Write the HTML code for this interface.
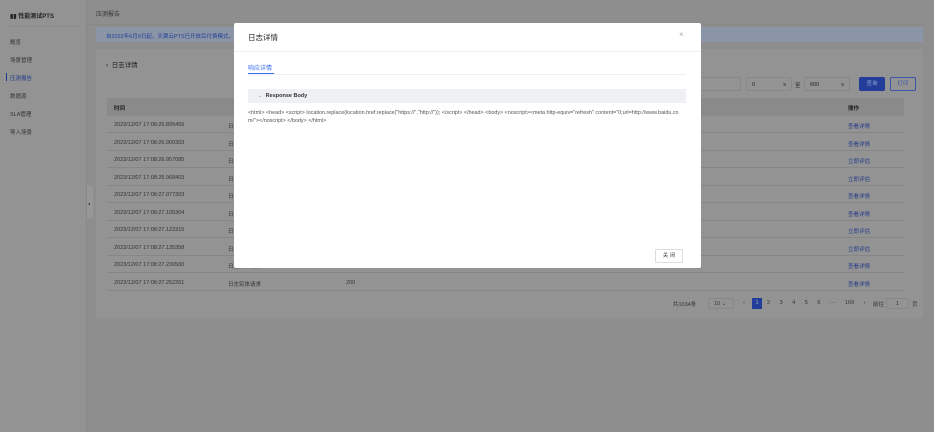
<!DOCTYPE html>
<html style="background:#8e8e8e"><head><meta charset="utf-8"><style>
*{margin:0;padding:0;box-sizing:border-box}
body{width:934px;height:432px;position:relative;overflow:hidden;background:#8e8e8e;font-family:"Liberation Sans","Noto Sans CJK SC",sans-serif;font-size:5.5px;color:#3a3a3a}
.a{position:absolute}
.side{left:0;top:0;width:87px;height:432px;background:#939393;border-right:1px solid #888}
.side div{position:absolute;left:10px;font-size:5.5px;color:#333}
.card{left:96px;top:49px;width:827px;height:269px;background:#939393}
.row{position:absolute;left:107px;width:797px;height:17px;border-bottom:1px solid #868686;font-size:5.5px;color:#333}
.row span{position:absolute;top:6px}
.lnk{color:#223a8a}
.modal{left:234px;top:23px;width:467px;height:245px;background:#fff;border-radius:2px}
</style></head><body>
<div class="a side">
<div style="top:11px;font-weight:bold;font-size:6px;color:#222">▮▮ 性能测试PTS</div>
<div style="left:8px;top:26px;width:70px;border-top:1px solid #8a8a8a"></div>
<div style="top:38px">概览</div>
<div style="top:56px">场景管理</div>
<div style="top:74px;color:#1c3a8c">压测报告</div>
<div style="left:6px;top:73px;width:1px;height:8px;background:#1c3a8c"></div>
<div style="top:92px">数据源</div>
<div style="top:110px">SLA管理</div>
<div style="top:128px">导入场景</div>
</div>
<div class="a" style="left:87px;top:185px;width:6px;height:34px;background:#979797;border-radius:0 4px 4px 0"></div>
<div class="a" style="left:88px;top:201px;font-size:4px;color:#222">◂</div>
<div class="a" style="left:96px;top:9px;font-size:6px;color:#333">压测报告</div>
<div class="a" style="left:87px;top:24px;width:847px;border-top:1px solid #888"></div>
<div class="a" style="left:96px;top:27px;width:838px;height:15px;background:#8c95a6;font-size:5.5px;color:#23409a;padding:5px 10px">自2022年6月9日起，天翼云PTS已开放后付费模式。</div>
<div class="a card">
<div class="a" style="left:10px;top:10px;font-size:6.5px;color:#222">‹&nbsp; 日志详情</div>
<div class="a" style="left:550px;top:28px;width:95px;height:14px;border:1px solid #888;border-radius:2px"></div>
<div class="a" style="left:650px;top:28px;width:46px;height:14px;border:1px solid #888;border-radius:2px;padding:4px 5px;color:#222">0<span style="float:right">s</span></div>
<div class="a" style="left:699px;top:32px;color:#222">至</div>
<div class="a" style="left:708px;top:28px;width:46px;height:14px;border:1px solid #888;border-radius:2px;padding:4px 5px;color:#222">600<span style="float:right">s</span></div>
<div class="a" style="left:763px;top:28px;width:26px;height:14px;background:#233e9a;border-radius:2px;color:#8ea0d0;text-align:center;line-height:14px">查询</div>
<div class="a" style="left:794px;top:28px;width:26px;height:14px;border:1px solid #3a55a5;border-radius:2px;color:#3a55a5;text-align:center;line-height:12px">打印</div>
</div>
<div class="a" style="left:107px;top:98px;width:797px;height:18px;background:#8a8a8a"></div>
<div class="a" style="left:114px;top:104px;font-weight:bold;color:#222">时间</div>
<div class="a" style="left:848px;top:104px;font-weight:bold;color:#222">操作</div>
<div class="row" style="top:116px"><span style="left:7px">2023/12/07 17:08:26.895455</span><span style="left:121px">日</span><span style="left:741px" class="lnk">查看详情</span></div>
<div class="row" style="top:133.5px"><span style="left:7px">2023/12/07 17:08:26.900303</span><span style="left:121px">日</span><span style="left:741px" class="lnk">查看详情</span></div>
<div class="row" style="top:151px"><span style="left:7px">2023/12/07 17:08:26.957085</span><span style="left:121px">日</span><span style="left:741px" class="lnk">立即评估</span></div>
<div class="row" style="top:168.5px"><span style="left:7px">2023/12/07 17:08:26.968403</span><span style="left:121px">日</span><span style="left:741px" class="lnk">立即评估</span></div>
<div class="row" style="top:186px"><span style="left:7px">2023/12/07 17:08:27.077303</span><span style="left:121px">日</span><span style="left:741px" class="lnk">查看详情</span></div>
<div class="row" style="top:203.5px"><span style="left:7px">2023/12/07 17:08:27.105304</span><span style="left:121px">日</span><span style="left:741px" class="lnk">查看详情</span></div>
<div class="row" style="top:221px"><span style="left:7px">2023/12/07 17:08:27.122315</span><span style="left:121px">日</span><span style="left:741px" class="lnk">立即评估</span></div>
<div class="row" style="top:238.5px"><span style="left:7px">2023/12/07 17:08:27.135358</span><span style="left:121px">日</span><span style="left:741px" class="lnk">立即评估</span></div>
<div class="row" style="top:256px"><span style="left:7px">2023/12/07 17:08:27.230500</span><span style="left:121px">日志实体请求</span><span style="left:239px">200</span><span style="left:741px" class="lnk">查看详情</span></div>
<div class="row" style="top:273.5px"><span style="left:7px">2023/12/07 17:08:27.252261</span><span style="left:121px">日志实体请求</span><span style="left:239px">200</span><span style="left:741px" class="lnk">查看详情</span></div>
<div class="a" style="left:673px;top:300px;color:#333">共1034条</div>
<div class="a" style="left:708px;top:298px;width:26px;height:11px;border:1px solid #888;border-radius:2px;padding:2px 5px;color:#333">10 ⌄</div>
<div class="a" style="left:743px;top:300px;color:#333">‹</div>
<div class="a" style="left:752px;top:298px;width:10px;height:11px;background:#233e9a;color:#aab;text-align:center;line-height:11px">1</div>
<div class="a" style="left:767px;top:300px;color:#333;word-spacing:8px">2 3 4 5 6 ··· 169 ›</div>
<div class="a" style="left:873px;top:300px;color:#333">前往</div>
<div class="a" style="left:886px;top:298px;width:23px;height:11px;border:1px solid #888;border-radius:2px;text-align:center;line-height:10px;color:#333">1</div>
<div class="a" style="left:912px;top:300px;color:#333">页</div>
<div class="a" style="left:923px;top:24px;width:11px;height:408px;background:#8e8e8e"></div>

<div class="a modal">
<div class="a" style="left:14px;top:9px;font-size:7.5px;color:#222">日志详情</div>
<div class="a" style="left:445px;top:7px;font-size:8px;color:#aaa">×</div>
<div class="a" style="left:0;top:28px;width:467px;border-top:1px solid #f0f0f0"></div>
<div class="a" style="left:14px;top:40px;font-size:6px;color:#3b6ef0">响应详情</div>
<div class="a" style="left:14px;top:50px;width:26px;height:1px;background:#3b6ef0"></div>
<div class="a" style="left:14px;top:51px;width:438px;border-top:1px solid #eee"></div>
<div class="a" style="left:14px;top:66px;width:438px;height:14px;background:#eff0f4;padding:4px 0 0 10px;font-size:5.5px;font-weight:bold;color:#333"><span style="color:#999;font-weight:normal">⌄</span>&nbsp; Response Body</div>
<div class="a" style="left:14px;top:86px;width:439px;font-size:5.4px;line-height:8px;color:#555;word-break:break-all">&lt;html&gt; &lt;head&gt; &lt;script&gt; location.replace(location.href.replace("https://","http://")); &lt;/script&gt; &lt;/head&gt; &lt;body&gt; &lt;noscript&gt;&lt;meta http-equiv="refresh" content="0;url=http://www.baidu.com/"&gt;&lt;/noscript&gt; &lt;/body&gt; &lt;/html&gt;</div>
<div class="a" style="left:421px;top:226px;width:28px;height:14px;border:1px solid #ddd;border-radius:2px;font-size:5.5px;text-align:center;line-height:12px;color:#444">关 闭</div>
</div>
</body></html>
